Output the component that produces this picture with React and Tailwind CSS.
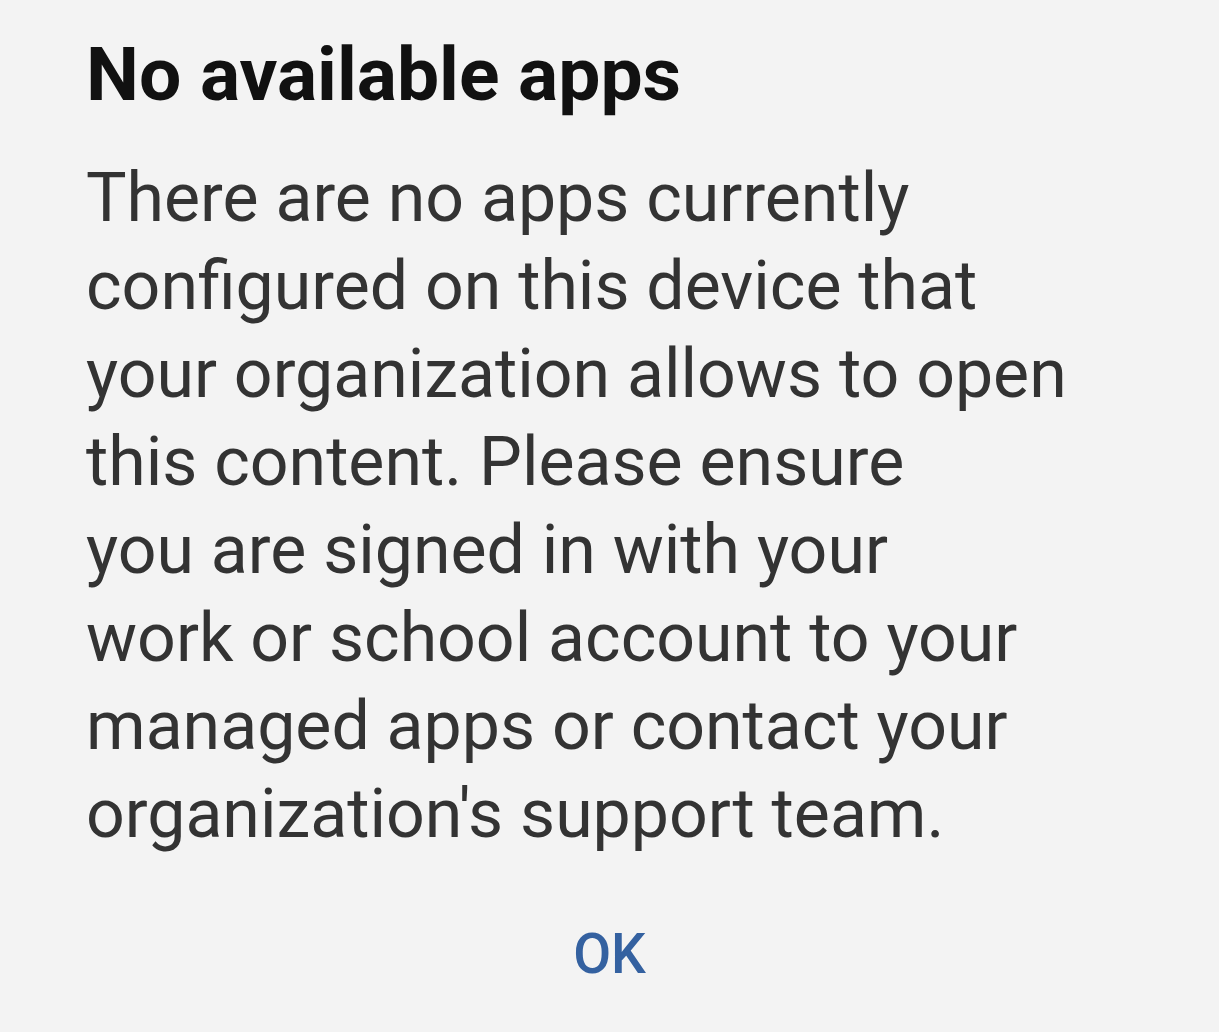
export default function App() {
  const lines = [
    'There are no apps currently',
    'configured on this device that',
    'your organization allows to open',
    'this content. Please ensure',
    'you are signed in with your',
    'work or school account to your',
    'managed apps or contact your',
    "organization's support team.",
  ];

  return (
    <div className="min-h-screen w-full bg-[#f3f3f3] font-['Roboto',sans-serif]">
      <div className="pl-[86px] pt-[30px]">
        <h1 className="text-[75px] leading-[88px] font-bold text-[#111111]">No available apps</h1>
        <div className="mt-[36px] text-[68px] leading-[88px] text-[#333333]">
          {lines.map((l) => (
            <div key={l} className="whitespace-nowrap">{l}</div>
          ))}
        </div>
      </div>
      <div className="mt-[66px] flex justify-center">
        <button className="text-[55px] leading-[60px] font-medium text-[#3461a0]">OK</button>
      </div>
    </div>
  );
}
